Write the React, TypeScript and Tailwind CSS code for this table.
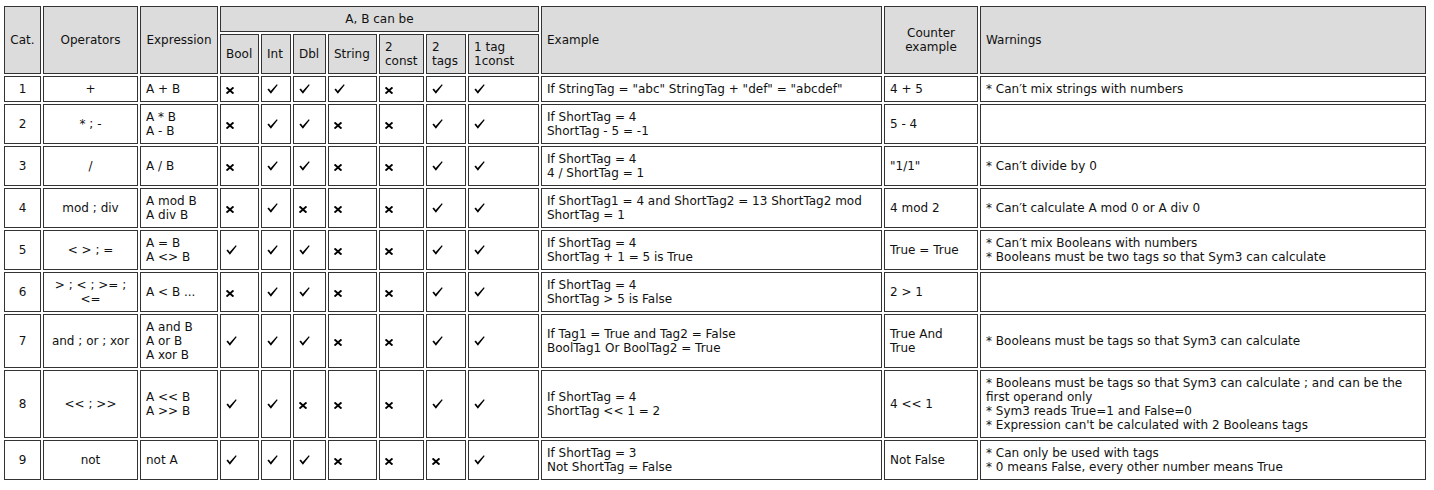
import type { ReactNode } from 'react';

type Mark = 0 | 1;

type Row = {
  cat: string;
  ops: string[];
  expr: string[];
  marks: Mark[];
  example: string[];
  counter: string[];
  warnings: string[];
};

const rows: Row[] = [
  { cat: '1', ops: ['+'], expr: ['A + B'], marks: [0, 1, 1, 1, 0, 1, 1], example: ['If StringTag = "abc" StringTag + "def" = "abcdef"'], counter: ['4 + 5'], warnings: ['* Can′t mix strings with numbers'] },
  { cat: '2', ops: ['* ; -'], expr: ['A * B', 'A - B'], marks: [0, 1, 1, 0, 0, 1, 1], example: ['If ShortTag = 4', 'ShortTag - 5 = -1'], counter: ['5 - 4'], warnings: [] },
  { cat: '3', ops: ['/'], expr: ['A / B'], marks: [0, 1, 1, 0, 0, 1, 1], example: ['If ShortTag = 4', '4 / ShortTag = 1'], counter: ['"1/1"'], warnings: ['* Can′t divide by 0'] },
  { cat: '4', ops: ['mod ; div'], expr: ['A mod B', 'A div B'], marks: [0, 1, 0, 0, 0, 1, 1], example: ['If ShortTag1 = 4 and ShortTag2 = 13 ShortTag2 mod', 'ShortTag = 1'], counter: ['4 mod 2'], warnings: ['* Can′t calculate A mod 0 or A div 0'] },
  { cat: '5', ops: ['< > ; ='], expr: ['A = B', 'A <> B'], marks: [1, 1, 1, 0, 0, 1, 1], example: ['If ShortTag = 4', 'ShortTag + 1 = 5 is True'], counter: ['True = True'], warnings: ['* Can′t mix Booleans with numbers', '* Booleans must be two tags so that Sym3 can calculate'] },
  { cat: '6', ops: ['> ; < ; >= ;', '<='], expr: ['A < B ...'], marks: [0, 1, 1, 0, 0, 1, 1], example: ['If ShortTag = 4', 'ShortTag > 5 is False'], counter: ['2 > 1'], warnings: [] },
  { cat: '7', ops: ['and ; or ; xor'], expr: ['A and B', 'A or B', 'A xor B'], marks: [1, 1, 1, 0, 0, 1, 1], example: ['If Tag1 = True and Tag2 = False', 'BoolTag1 Or BoolTag2 = True'], counter: ['True And', 'True'], warnings: ['* Booleans must be tags so that Sym3 can calculate'] },
  { cat: '8', ops: ['<< ; >>'], expr: ['A << B', 'A >> B'], marks: [1, 1, 0, 0, 0, 1, 1], example: ['If ShortTag = 4', 'ShortTag << 1 = 2'], counter: ['4 << 1'], warnings: ['* Booleans must be tags so that Sym3 can calculate ; and can be the', 'first operand only', '* Sym3 reads True=1 and False=0', "* Expression can't be calculated with 2 Booleans tags"] },
  { cat: '9', ops: ['not'], expr: ['not A'], marks: [1, 1, 1, 0, 0, 0, 1], example: ['If ShortTag = 3', 'Not ShortTag = False'], counter: ['Not False'], warnings: ['* Can only be used with tags', '* 0 means False, every other number means True'] },
];

function Lines({ lines }: { lines: string[] }) {
  return (
    <div className="whitespace-pre">
      {lines.map((l, i) => (
        <div key={i}>{l}</div>
      ))}
    </div>
  );
}

function Cell({ children, center, head, className = '' }: { children?: ReactNode; center?: boolean; head?: boolean; className?: string }) {
  return (
    <div
      className={`flex items-center border border-[#333] px-[5px] py-[5px] ${center ? 'justify-center text-center' : ''} ${head ? 'bg-[#dcdcdc]' : 'bg-white'} ${className}`}
    >
      {children}
    </div>
  );
}

function Check() {
  return (
    <svg width="11" height="10" viewBox="0 0 11 10" className="inline-block">
      <path d="M0.4 5.5 L1.9 4.4 L3.7 7 L9.8 0.3 L10.7 1 L3.9 9.7 Z" fill="#000" />
    </svg>
  );
}

function Cross() {
  return (
    <svg width="8" height="7" viewBox="0 0 8 7" className="inline-block">
      <path d="M1.2 1 L6.8 6 M6.8 1 L1.2 6" stroke="#000" strokeWidth="1.8" strokeLinecap="square" />
    </svg>
  );
}

export default function App() {
  const subHeads: string[][] = [['Bool'], ['Int'], ['Dbl'], ['String'], ['2', 'const'], ['2', 'tags'], ['1 tag', '1const']];
  return (
    <div className="bg-white pl-[2px] pt-[4px] font-['DejaVu_Sans',sans-serif] text-[12px] leading-[14px] text-[#111]">
      <div className="grid w-max grid-cols-[37px_95px_78px_39px_30px_33px_49px_45px_40px_71px_341px_94px_446px] gap-[2px] p-[2px]">
        <Cell head center className="row-span-2">Cat.</Cell>
        <Cell head center className="row-span-2">Operators</Cell>
        <Cell head center className="row-span-2">Expression</Cell>
        <Cell head center className="col-span-7">A, B can be</Cell>
        <Cell head className="row-span-2">Example</Cell>
        <Cell head center className="row-span-2">
          <Lines lines={['Counter', 'example']} />
        </Cell>
        <Cell head className="row-span-2">Warnings</Cell>
        {subHeads.map((s, i) => (
          <Cell head key={i}>
            <Lines lines={s} />
          </Cell>
        ))}
        {rows.map((r) => (
          <div key={r.cat} className="contents">
            <Cell center>{r.cat}</Cell>
            <Cell center>
              <Lines lines={r.ops} />
            </Cell>
            <Cell>
              <Lines lines={r.expr} />
            </Cell>
            {r.marks.map((m, i) => (
              <Cell key={i}>
                <div className="h-[14px] flex items-end pb-[2px]">{m ? <Check /> : <Cross />}</div>
              </Cell>
            ))}
            <Cell>
              <Lines lines={r.example} />
            </Cell>
            <Cell>
              <Lines lines={r.counter} />
            </Cell>
            <Cell>
              <Lines lines={r.warnings} />
            </Cell>
          </div>
        ))}
      </div>
    </div>
  );
}
